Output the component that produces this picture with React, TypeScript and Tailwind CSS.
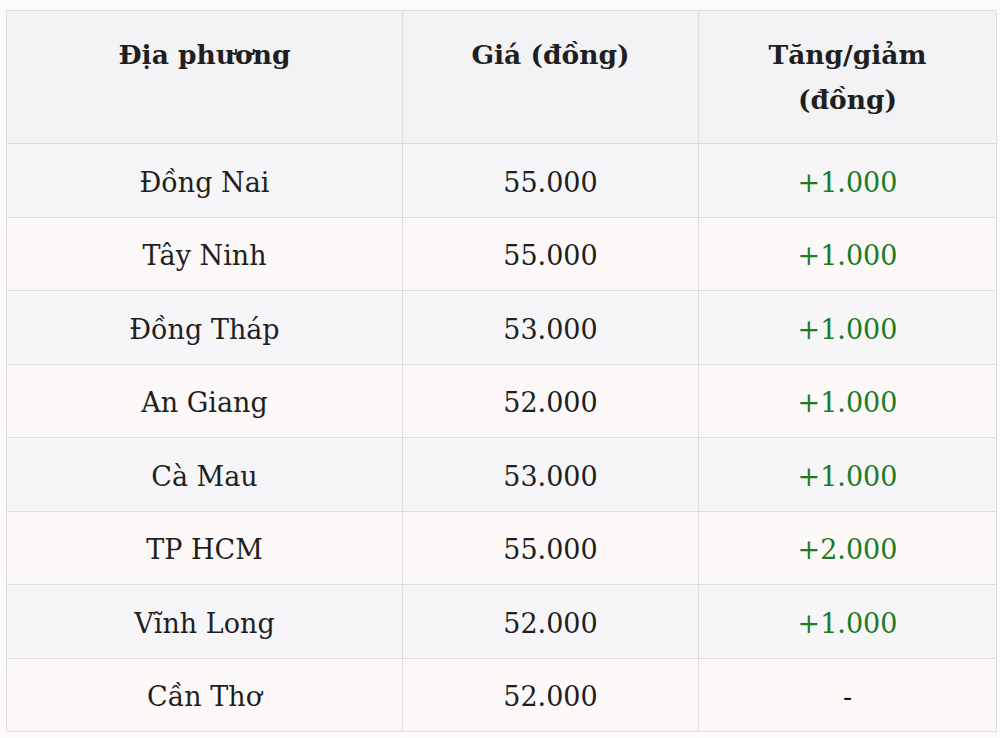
import React from 'react';

const rows = [
  { place: 'Đồng Nai', price: '55.000', change: '+1.000' },
  { place: 'Tây Ninh', price: '55.000', change: '+1.000' },
  { place: 'Đồng Tháp', price: '53.000', change: '+1.000' },
  { place: 'An Giang', price: '52.000', change: '+1.000' },
  { place: 'Cà Mau', price: '53.000', change: '+1.000' },
  { place: 'TP HCM', price: '55.000', change: '+2.000' },
  { place: 'Vĩnh Long', price: '52.000', change: '+1.000' },
  { place: 'Cần Thơ', price: '52.000', change: '-' },
];

export default function App() {
  return (
    <div className="min-h-[738px] bg-[#fdfbfa] pt-[10px] pl-[6px] font-['DejaVu_Serif',serif] text-[#1f1f1f]">
      <table className="w-[990px] table-fixed border-collapse">
        <colgroup>
          <col className="w-[396px]" />
          <col className="w-[296px]" />
          <col className="w-[298px]" />
        </colgroup>
        <thead>
          <tr className="h-[133px] bg-[#f3f3f6]">
            {['Địa phương', 'Giá (đồng)', 'Tăng/giảm (đồng)'].map((h) => (
              <th
                key={h}
                className="border border-[#dddddd] px-[60px] pt-[21px] align-top text-center text-[26.5px] font-bold leading-[45px]"
              >
                {h}
              </th>
            ))}
          </tr>
        </thead>
        <tbody>
          {rows.map((r, i) => (
            <tr key={r.place} className={`h-[73.5px] ${i % 2 === 0 ? 'bg-[#f6f6f9]' : 'bg-[#fcf9f8]'}`}>
              <td className="border border-[#dddddd] pt-[5px] text-center align-middle text-[27px]">{r.place}</td>
              <td className="border border-[#dddddd] pt-[5px] text-center align-middle text-[27px]">{r.price}</td>
              <td
                className={`border border-[#dddddd] pt-[5px] text-center align-middle text-[27px] ${
                  r.change === '-' ? 'text-[#111]' : 'text-[#1e7b22]'
                }`}
              >
                {r.change}
              </td>
            </tr>
          ))}
        </tbody>
      </table>
    </div>
  );
}
